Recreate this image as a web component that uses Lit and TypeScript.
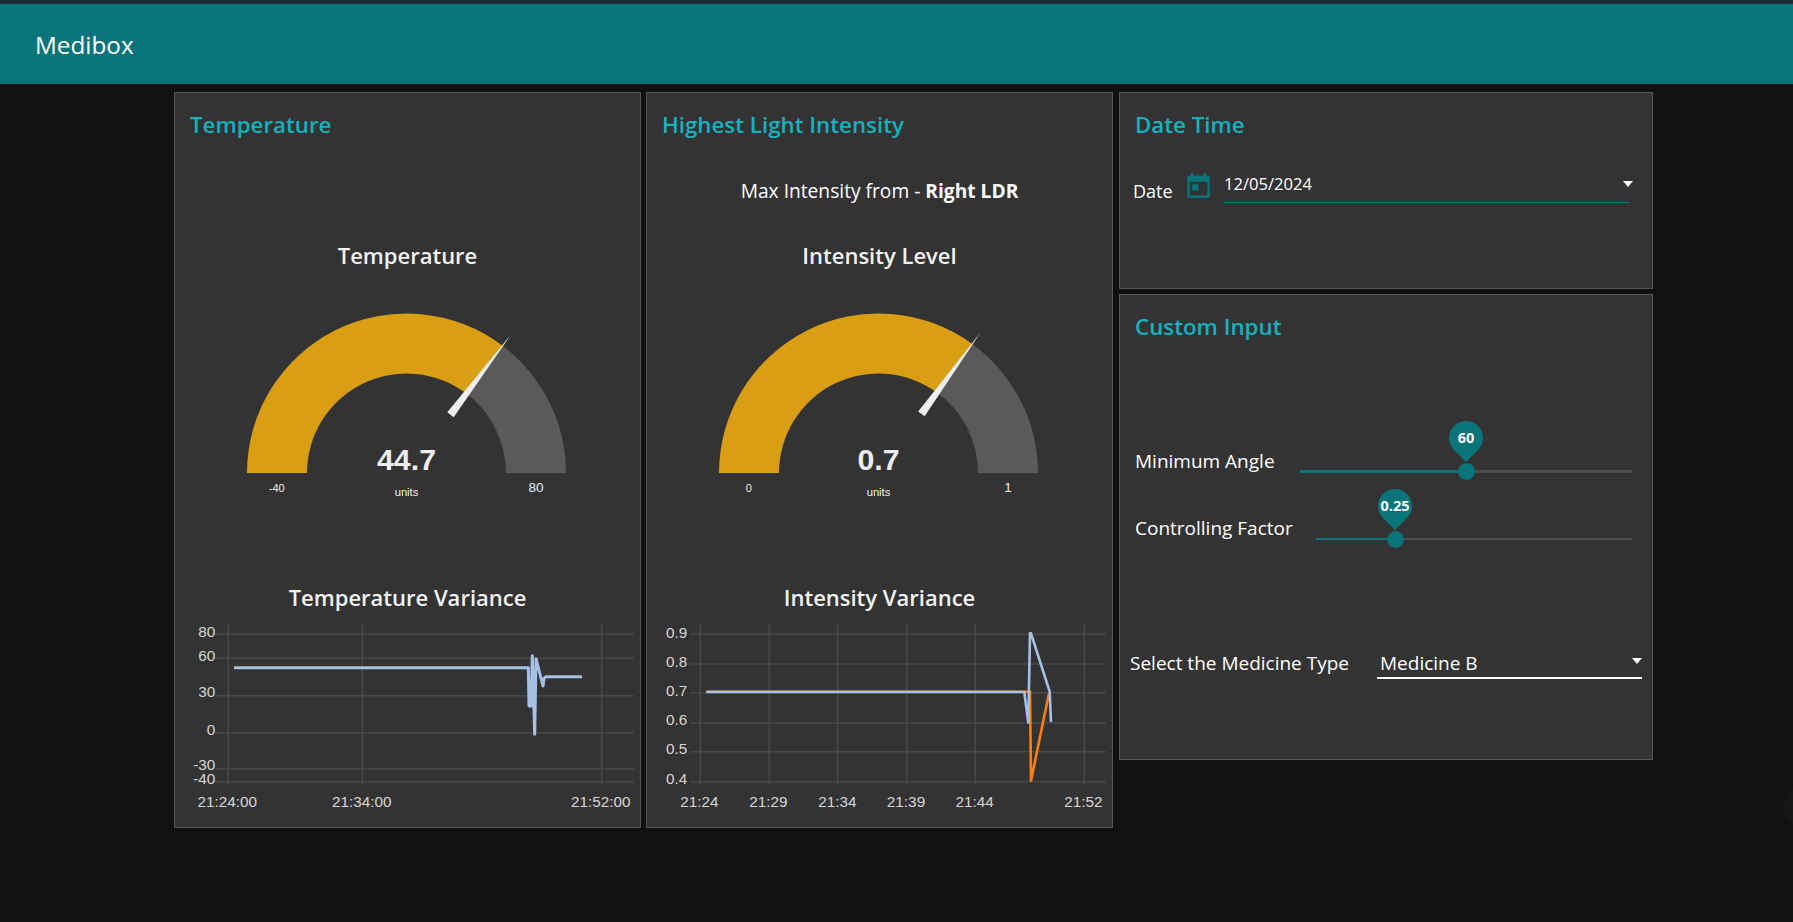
import { LitElement, css, html, svg } from "lit";
import { customElement, property } from "lit/decorators.js";

type Point = [number, number];
type Tick = { label: string; pos: number };

type ChartData = {
  vertical: number[];
  horizontal: number[];
  lineStart: number;
  lineWidth: number;
  yTicks: Tick[];
  xTicks: Tick[];
  series: { color: string; points: Point[] }[];
};

const BLUE = "#a6c1e4";
const ORANGE = "#ff7f0e";

const temperatureChart: ChartData = {
  vertical: [53.3, 187.3, 426.7],
  horizontal: [14.3, 38.3, 75.7, 112.7, 149, 161.7],
  lineStart: 40,
  lineWidth: 3,
  yTicks: [
    { label: "80", pos: 16.8 },
    { label: "60", pos: 41 },
    { label: "30", pos: 77 },
    { label: "0", pos: 115 },
    { label: "-30", pos: 150 },
    { label: "-40", pos: 164 }
  ],
  xTicks: [
    { label: "21:24:00", pos: 52.3 },
    { label: "21:34:00", pos: 186.7 },
    { label: "21:52:00", pos: 425.7 }
  ],
  series: [
    {
      color: BLUE,
      points: [
        [59, 47.7], [353.3, 47.7], [354, 86], [356, 86], [357.3, 35.7], [359.7, 114.3],
        [361, 38.7], [368, 66], [369, 58.3], [371, 56.7], [407, 56.7]
      ]
    }
  ]
};

const intensityChart: ChartData = {
  vertical: [53.3, 122.3, 190.7, 259.7, 328.3, 437.3],
  horizontal: [14.3, 44, 72.7, 103, 131.7, 161.7],
  lineStart: 43,
  lineWidth: 2.6,
  yTicks: [
    { label: "0.9", pos: 17.8 },
    { label: "0.8", pos: 47 },
    { label: "0.7", pos: 76 },
    { label: "0.6", pos: 105 },
    { label: "0.5", pos: 133.6 },
    { label: "0.4", pos: 163.6 }
  ],
  xTicks: [
    { label: "21:24", pos: 52.3 },
    { label: "21:29", pos: 121.3 },
    { label: "21:34", pos: 190.3 },
    { label: "21:39", pos: 259 },
    { label: "21:44", pos: 327.7 },
    { label: "21:52", pos: 436.3 }
  ],
  series: [
    {
      color: ORANGE,
      points: [[59.3, 71.7], [379.7, 71.7], [383, 71.7], [384, 160.7], [402, 73.3]]
    },
    {
      color: BLUE,
      points: [
        [59.3, 72], [377.3, 72], [381.3, 102.7], [383, 13.3], [384, 13.3],
        [402.7, 71.7], [404, 102]
      ]
    }
  ]
};

@customElement("ui-gauge")
export class UiGauge extends LitElement {
  static styles = css`
    :host {
      display: block;
      height: 200px;
    }
    svg {
      display: block;
    }
    text {
      font-family: "Liberation Sans", Arial, sans-serif;
      fill: #eee;
      text-anchor: middle;
    }
    .value {
      font-size: 30.3px;
      font-weight: 700;
    }
    .units {
      font-size: 11.2px;
    }
    .min {
      font-size: 11px;
    }
    .max {
      font-size: 13.5px;
    }
  `;

  @property({ type: Number }) value = 0;
  @property({ type: Number }) min = 0;
  @property({ type: Number }) max = 1;

  private polar(radius: number, angle: number): string {
    const cx = 231.5;
    const cy = 173;
    return `${(cx + radius * Math.cos(angle)).toFixed(2)} ${(cy - radius * Math.sin(angle)).toFixed(2)}`;
  }

  private arc(from: number, to: number): string {
    const outer = 159.5;
    const inner = 99.5;
    return `M${this.polar(outer, from)} A${outer} ${outer} 0 0 1 ${this.polar(outer, to)} L${this.polar(inner, to)} A${inner} ${inner} 0 0 0 ${this.polar(inner, from)} Z`;
  }

  protected override render() {
    const ratio = (this.value - this.min) / (this.max - this.min);
    const angle = Math.PI * (1 - ratio);
    const tip = this.polar(173, angle);
    const baseMid = 73;
    const side = Math.atan2(4, baseMid);
    const baseRadius = Math.hypot(baseMid, 4);

    return html`
      <svg width="465" height="200" viewBox="0 0 465 200">
        ${svg`
          <path d=${this.arc(angle, 0)} fill="#5a5a5a"></path>
          <path d=${this.arc(Math.PI, angle)} fill="#d99e14"></path>
          <polygon
            points="${tip} ${this.polar(baseRadius, angle - side)} ${this.polar(baseRadius, angle + side)}"
            fill="#eee"
          ></polygon>
          <text class="value" x="231.5" y="170">${this.value}</text>
          <text class="units" x="231.5" y="195.6">units</text>
          <text class="min" x="101.7" y="191.7">${this.min}</text>
          <text class="max" x="361" y="191.5">${this.max}</text>
        `}
      </svg>
    `;
  }
}

@customElement("ui-chart")
export class UiChart extends LitElement {
  static styles = css`
    :host {
      display: block;
      height: 200px;
    }
    svg {
      display: block;
    }
    text {
      font-family: "Liberation Sans", Arial, sans-serif;
      font-size: 15.3px;
      fill: #d6d6d6;
    }
    .y {
      text-anchor: end;
    }
    .x {
      text-anchor: middle;
    }
    .grid {
      stroke: #484848;
      stroke-width: 1.6;
    }
    .series {
      fill: none;
      stroke-linejoin: round;
    }
  `;

  @property({ attribute: false }) data!: ChartData;

  protected override render() {
    const d = this.data;
    return html`
      <svg width="465" height="200" viewBox="0 0 465 200">
        ${d.vertical.map((x) => svg`<line class="grid" x1=${x} x2=${x} y1="5" y2="165"></line>`)}
        ${d.horizontal.map((y) => svg`<line class="grid" x1=${d.lineStart} x2="459" y1=${y} y2=${y}></line>`)}
        ${d.yTicks.map((t) => svg`<text class="y" x="40.3" y=${t.pos}>${t.label}</text>`)}
        ${d.xTicks.map((t) => svg`<text class="x" x=${t.pos} y="186.6">${t.label}</text>`)}
        ${d.series.map(
          (s) => svg`<polyline class="series" stroke=${s.color} stroke-width=${d.lineWidth} points=${s.points.map((p) => p.join(",")).join(" ")}></polyline>`
        )}
      </svg>
    `;
  }
}

@customElement("ui-slider")
export class UiSlider extends LitElement {
  static styles = css`
    :host {
      display: block;
      position: relative;
      flex: 1;
      height: 34px;
    }
    .track {
      margin-top: 21px;
      height: 3px;
      background: #4d4d4d;
    }
    :host([thin]) .track {
      margin-top: 22px;
      height: 2px;
    }
    .fill {
      height: 100%;
      background: #097479;
    }
    .thumb {
      position: absolute;
      top: 22.5px;
      width: 17px;
      height: 17px;
      margin: -8.5px 0 0 -8.5px;
      border-radius: 50%;
      background: #097479;
    }
    :host([thin]) .thumb {
      top: 23px;
    }
    .pin {
      position: absolute;
      top: -29px;
      width: 36px;
      height: 44px;
      margin-left: -18px;
    }
    :host([thin]) .pin {
      top: -28px;
    }
    text {
      font-family: "Open Sans", "Liberation Sans", sans-serif;
      font-size: 14.5px;
      font-weight: 700;
      fill: #fff;
      text-anchor: middle;
    }
  `;

  @property() label = "";
  @property({ type: Number }) percent = 0;
  @property({ type: Boolean, reflect: true }) thin = false;

  protected override render() {
    const left = `${this.percent}%`;
    return html`
      <div class="track"><div class="fill" style="width:${left}"></div></div>
      <div class="thumb" style="left:${left}"></div>
      <svg class="pin" style="left:${left}" viewBox="0 0 36 44">
        <path d="M18 42 L6 30 A17 17 0 1 1 30 30 Z" fill="#097479"></path>
        <text x="18" y="22.5">${this.label}</text>
      </svg>
    `;
  }
}

@customElement("app-root")
export class AppRoot extends LitElement {
  static styles = css`
    :host {
      display: block;
      position: relative;
      height: 922px;
      overflow: hidden;
      background: #111;
      color: #fff;
      font-family: "Open Sans", "Liberation Sans", sans-serif;
    }
    .toolbar {
      display: flex;
      align-items: center;
      height: 80px;
      padding-left: 35px;
      border-top: 4px solid #1d2a31;
      background: #097479;
      font-size: 24.3px;
    }
    .layout {
      display: flex;
      align-items: flex-start;
      gap: 5px;
      padding: 8px 0 0 174px;
    }
    .stack {
      display: flex;
      flex-direction: column;
      gap: 5px;
      margin-left: 1px;
    }
    .card {
      box-sizing: border-box;
      width: 467px;
      height: 736px;
      border: 1px solid #565656;
      background: #333;
    }
    .wide {
      width: 534px;
    }
    .date-card {
      height: 197px;
    }
    .input-card {
      height: 466px;
    }
    .group-title {
      height: 30px;
      margin: 17px 0 0 15px;
      font-size: 22.3px;
      font-weight: 600;
      line-height: 30px;
      color: #14b2bf;
    }
    .note {
      height: 30px;
      margin-top: 36px;
      font-size: 19.2px;
      line-height: 30px;
      text-align: center;
    }
    .note b {
      font-weight: 700;
    }
    .widget-title {
      height: 30px;
      font-size: 22px;
      font-weight: 600;
      line-height: 30px;
      text-align: center;
      color: #f2f2f2;
    }
    .gauge-title {
      margin-top: 34px;
    }
    ui-gauge {
      margin-top: 30px;
    }
    .chart-title {
      margin-top: 82px;
    }
    ui-chart {
      margin-top: 8px;
    }
    .date-row {
      display: flex;
      align-items: flex-start;
      margin: 30px 0 0 13px;
    }
    .date-label {
      width: 54px;
      margin-top: 9px;
      font-size: 18px;
      line-height: 24px;
    }
    .date-icon {
      display: block;
      margin: 3px 14px 0 0;
      fill: #097479;
    }
    .date-field {
      display: flex;
      align-items: center;
      justify-content: space-between;
      box-sizing: border-box;
      width: 406px;
      height: 33px;
      padding-bottom: 5px;
      border-bottom: 1px solid #097479;
      font-size: 16.6px;
    }
    .arrow {
      width: 0;
      height: 0;
      margin-right: -3px;
      border-left: 5.5px solid transparent;
      border-right: 5.5px solid transparent;
      border-top: 6.5px solid #fff;
    }
    .slider-row {
      display: flex;
      align-items: flex-start;
      padding: 0 20px 0 15px;
      font-size: 19px;
      line-height: 24px;
    }
    .slider-first {
      margin-top: 107px;
    }
    .slider-second {
      margin-top: 33px;
    }
    .slider-label {
      width: 165px;
    }
    .slider-second .slider-label {
      width: 181px;
    }
    .select-row {
      display: flex;
      align-items: flex-start;
      margin-top: 95px;
      padding-left: 10px;
      font-size: 19px;
      line-height: 24px;
    }
    .select-label {
      width: 247px;
      margin-top: 6px;
      white-space: nowrap;
    }
    .select-field {
      display: flex;
      align-items: center;
      justify-content: space-between;
      box-sizing: border-box;
      width: 265px;
      height: 34px;
      padding: 3px 0 0 3px;
      border-bottom: 2px solid #fff;
    }
    .select-field .arrow {
      margin: 0 0 3px 0;
      border-left-width: 5px;
      border-right-width: 5px;
      border-top-width: 6px;
    }
    .edge-glow {
      position: absolute;
      left: 1783px;
      top: 785px;
      width: 42px;
      height: 43px;
      border-radius: 50%;
      background: #161616;
    }
  `;

  protected override render() {
    return html`
      <header class="toolbar">Medibox</header>
      <main class="layout">
        <section class="card">
          <div class="group-title">Temperature</div>
          <div class="note"></div>
          <div class="widget-title gauge-title">Temperature</div>
          <ui-gauge .value=${44.7} .min=${-40} .max=${80}></ui-gauge>
          <div class="widget-title chart-title">Temperature Variance</div>
          <ui-chart .data=${temperatureChart}></ui-chart>
        </section>

        <section class="card">
          <div class="group-title">Highest Light Intensity</div>
          <div class="note">Max Intensity from - <b>Right LDR</b></div>
          <div class="widget-title gauge-title">Intensity Level</div>
          <ui-gauge .value=${0.7} .min=${0} .max=${1}></ui-gauge>
          <div class="widget-title chart-title">Intensity Variance</div>
          <ui-chart .data=${intensityChart}></ui-chart>
        </section>

        <div class="stack">
          <section class="card wide date-card">
            <div class="group-title">Date Time</div>
            <div class="date-row">
              <span class="date-label">Date</span>
              <svg class="date-icon" width="23" height="25" viewBox="3 1 18 20">
                <path d="M19 3h-1V1h-2v2H8V1H6v2H5c-1.11 0-1.99.9-1.99 2L3 19c0 1.1.89 2 2 2h14c1.1 0 2-.9 2-2V5c0-1.1-.9-2-2-2zm0 16H5V8h14v11zM7 10h5v5H7z"></path>
              </svg>
              <div class="date-field">
                <span>12/05/2024</span>
                <span class="arrow"></span>
              </div>
            </div>
          </section>

          <section class="card wide input-card">
            <div class="group-title">Custom Input</div>
            <div class="slider-row slider-first">
              <span class="slider-label">Minimum Angle</span>
              <ui-slider label="60" .percent=${50}></ui-slider>
            </div>
            <div class="slider-row slider-second">
              <span class="slider-label">Controlling Factor</span>
              <ui-slider label="0.25" .percent=${25} thin></ui-slider>
            </div>
            <div class="select-row">
              <span class="select-label">Select the Medicine Type</span>
              <div class="select-field">
                <span>Medicine B</span>
                <span class="arrow"></span>
              </div>
            </div>
          </section>
        </div>
      </main>
      <div class="edge-glow"></div>
    `;
  }
}
